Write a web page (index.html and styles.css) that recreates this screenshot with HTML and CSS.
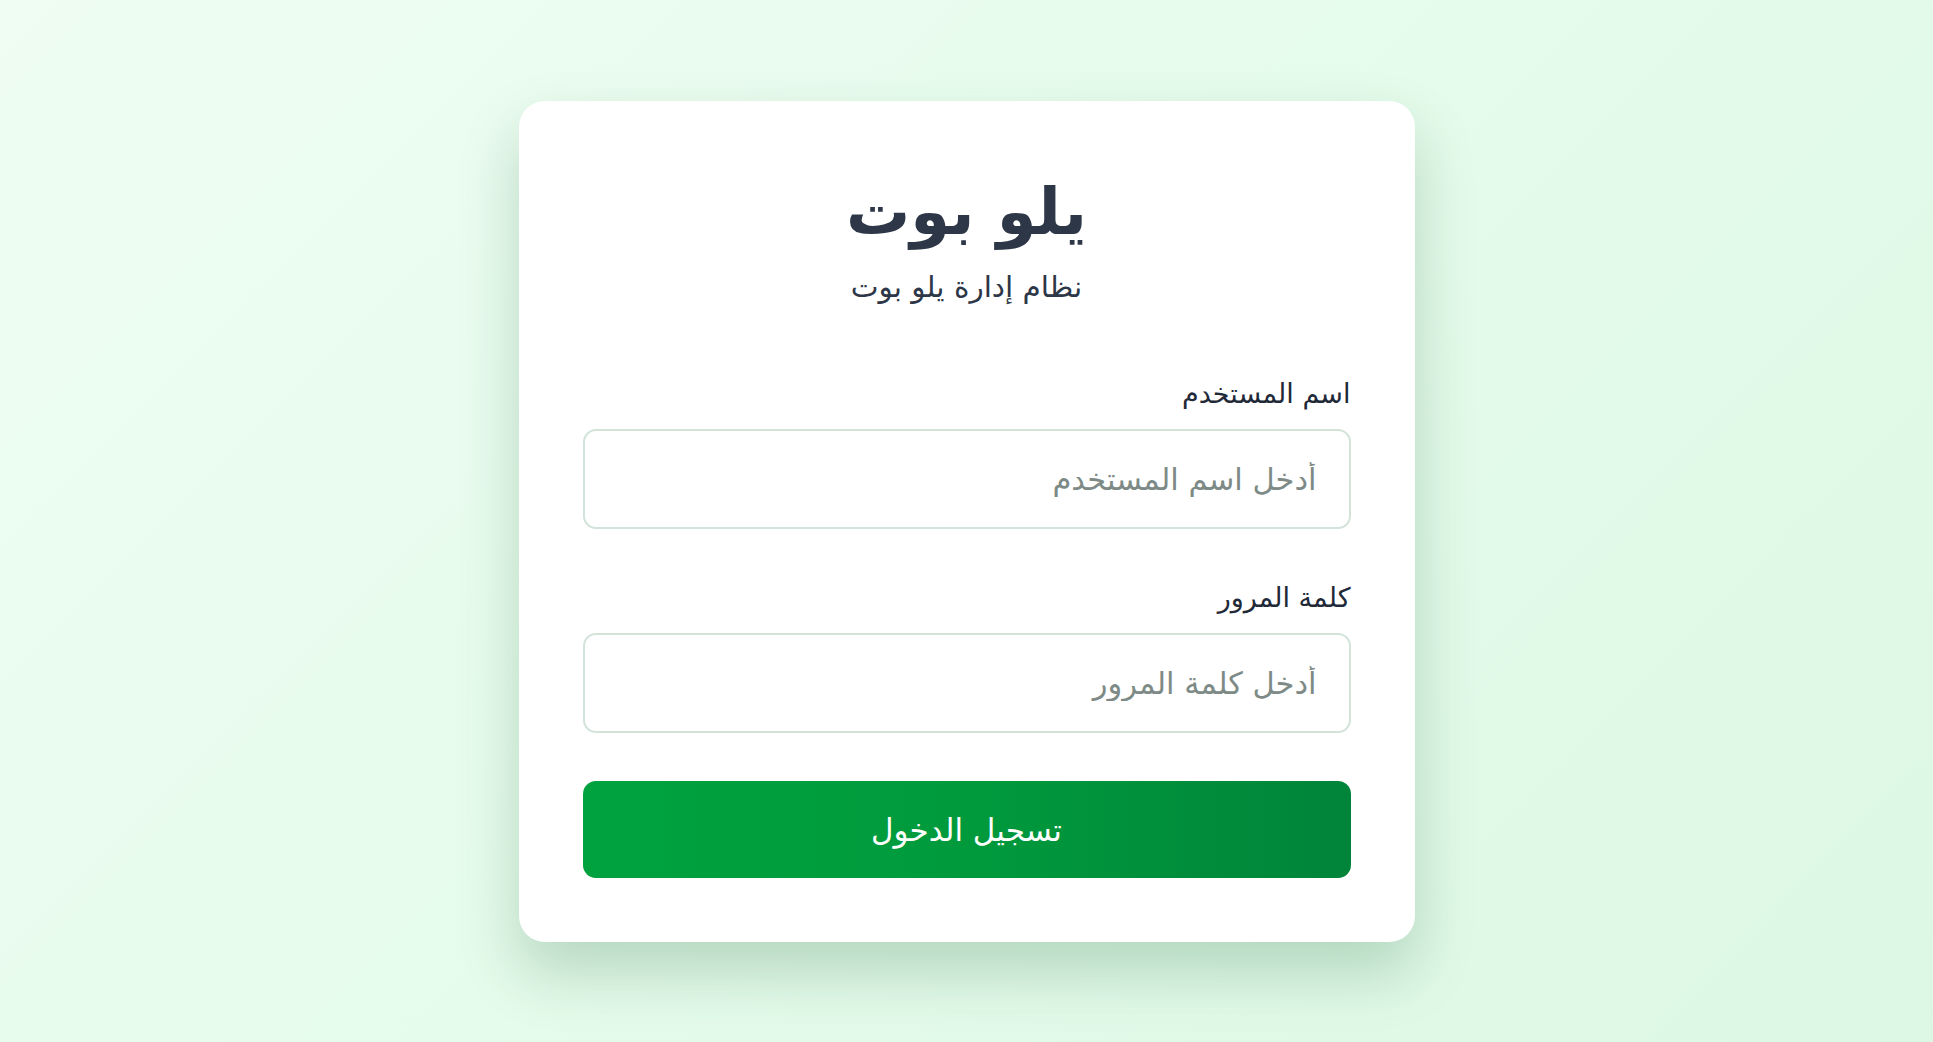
FILE: index.html
```html
<!DOCTYPE html>
<html lang="ar" dir="rtl">
<head>
    <meta charset="UTF-8">
    <meta name="viewport" content="width=device-width, initial-scale=1.0">
    <title>يلو بوت - تسجيل الدخول</title>
    <link rel="stylesheet" href="styles.css">
</head>
<body>
    <div class="login-box">
        <div class="login-header">
            <h1>يلو بوت</h1>
            <p>نظام إدارة يلو بوت</p>
        </div>

        <form class="login-form" onsubmit="return false;">
            <div class="form-group">
                <label for="username">اسم المستخدم</label>
                <input type="text" id="username" placeholder="أدخل اسم المستخدم">
            </div>
            <div class="form-group">
                <label for="password">كلمة المرور</label>
                <input type="password" id="password" placeholder="أدخل كلمة المرور">
            </div>
            <button type="submit" class="login-btn">تسجيل الدخول</button>
        </form>
    </div>
</body>
</html>
```

FILE: styles.css
```css
* { box-sizing: border-box; }
html, body { height: 100%; }
body {
    margin: 0;
    font-family: "DejaVu Sans", "Noto Sans", sans-serif;
    background: linear-gradient(135deg, #effdf3 0%, #e5fbeb 50%, #dcf8e4 100%);
    display: flex;
    justify-content: center;
    align-items: flex-start;
    padding-top: 101px;
}
.login-box {
    width: 896px;
    background: #fff;
    border-radius: 26px;
    padding: 69px 64px 64px;
    box-shadow: 0 30px 60px rgba(20, 90, 45, 0.22);
}
.login-header { text-align: center; margin-bottom: 69px; }
.login-header h1 { margin: 0; font-size: 64px; line-height: 84px; font-weight: bold; color: #2d3748; }
.login-header p { margin: 13px 0 0; font-size: 29.5px; line-height: 40px; color: #2d3748; }
.form-group { margin-bottom: 51px; }
.form-group:last-of-type { margin-bottom: 0; }
.form-group label { display: block; font-size: 27px; line-height: 36px; color: #1f2937; margin-bottom: 17px; }
.form-group input {
    width: 100%;
    height: 100px;
    padding: 0 32px;
    border: 2px solid #d2e3da;
    border-radius: 13px;
    font-family: inherit;
    font-size: 30.5px;
    color: #1f2937;
    background: #fff;
    outline: none;
}
.form-group input::placeholder { color: #7d8a86; }
.login-btn {
    display: block;
    width: 100%;
    height: 97px;
    margin-top: 48px;
    border: none;
    border-radius: 13px;
    background: linear-gradient(90deg, #00a23f 0%, #009a3c 50%, #00843a 100%);
    color: #fff;
    font-family: inherit;
    font-size: 31px;
    cursor: pointer;
}
```
